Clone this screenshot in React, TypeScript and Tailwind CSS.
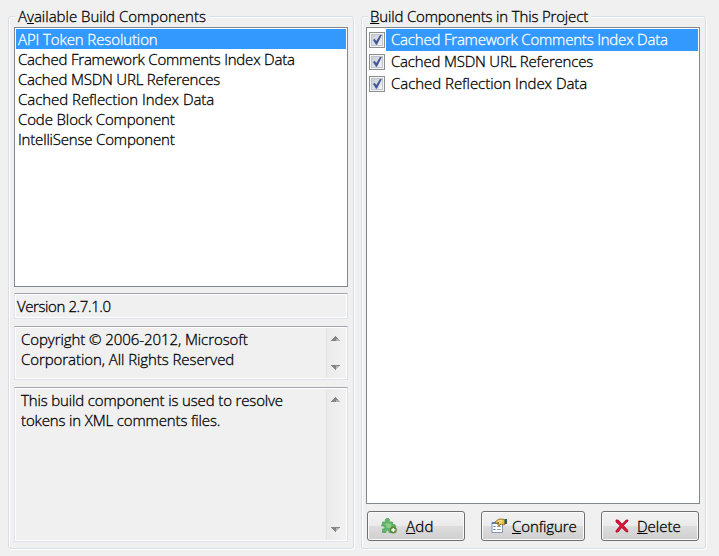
import React from "react";

type Line = { text: string; spacing: string };

const available: Line[] = [
  { text: "API Token Resolution", spacing: "tracking-[-0.1px]" },
  { text: "Cached Framework Comments Index Data", spacing: "tracking-[-0.2px]" },
  { text: "Cached MSDN URL References", spacing: "tracking-[-0.2px]" },
  { text: "Cached Reflection Index Data", spacing: "tracking-[-0.04px]" },
  { text: "Code Block Component", spacing: "tracking-[-0.12px]" },
  { text: "IntelliSense Component", spacing: "tracking-[-0.18px]" },
];

const project: Line[] = available.slice(1, 4);

function Key({ children }: { children: string }) {
  return <span className="underline decoration-1 underline-offset-[1px] [text-decoration-skip-ink:none]">{children}</span>;
}

function Group({ legend, width, children }: { legend: React.ReactNode; width: string; children: React.ReactNode }) {
  return (
    <section className={`relative h-[533px] rounded-[3px] border border-[#d5dfe5] shadow-[1px_1px_0_#fff,inset_1px_1px_0_#fff] ${width}`}>
      <h2 className="absolute -top-[11px] left-[6px] bg-[#f0f0f0] px-[3px] leading-5 font-light whitespace-nowrap">{legend}</h2>
      {children}
    </section>
  );
}

function Scrollbar() {
  return (
    <div className="flex w-5 shrink-0 flex-col items-center justify-between border-l border-[#e2e2e2] bg-linear-to-r from-[#ebebeb] to-[#f2f2f2] pt-[8px] pb-[8px] pr-[3px]">
      <svg width="9" height="5" viewBox="0 0 9 5" shapeRendering="crispEdges">
        <path d="M4 0h1v1h1v1h1v1h1v1h1v1H0V4h1V3h1V2h1V1h1z" fill="#858585" />
        <path d="M5 3h3v1h1v1H5z" fill="#b0b0b0" />
      </svg>
      <svg width="9" height="5" viewBox="0 0 9 5" shapeRendering="crispEdges">
        <path d="M0 0h9v1H8v1H7v1H6v1H5v1H4V4H3V3H2V2H1V1H0z" fill="#858585" />
        <path d="M5 1h3v1H7v1H6v1H5z" fill="#b8b8b8" />
      </svg>
    </div>
  );
}

const sunken = "border border-[#dfe2e9] border-t-[#a5a5ad] shadow-[inset_0_0_0_1px_#fff]";

function Checkbox() {
  return (
    <svg className="block shrink-0" width="16" height="16" viewBox="0 0 16 16">
      <defs>
        <linearGradient id="box" x1="0" y1="0" x2="1" y2="1">
          <stop stopColor="#c5cad3" />
          <stop offset="1" stopColor="#f5f6f7" />
        </linearGradient>
      </defs>
      <rect x=".5" y=".5" width="15" height="15" fill="#f4f4f4" stroke="#8e8f8f" />
      <rect x="2.5" y="2.5" width="11" height="11" fill="url(#box)" stroke="#c0c5cd" />
      <path d="M4 8l1.600-1.200 1.700 2.200L11 3h1.800L8 12.800H7z" fill="#425899" />
    </svg>
  );
}

function Button({ width, pad, children }: { width: string; pad: string; children: React.ReactNode }) {
  return (
    <button className={`flex h-[30px] items-center rounded-[3px] border border-[#707070] bg-[linear-gradient(#f2f2f2,#ebebeb_48%,#dddddd_50%,#cfcfcf)] shadow-[inset_0_0_0_1px_#fafafa] ${width} ${pad}`}>
      {children}
    </button>
  );
}

function PuzzleIcon() {
  return (
    <svg width="16" height="16" viewBox="0 0 16 16">
      <path d="M1.500 4H5L4.300 2.700V1.500L5.500.5h2l1 1v1.200L7.800 4H11.500v3l1.500-.7 1.500 1v2L13 10.500H11.500v4H8V13L6.500 12 5 13v1.500H1.500V11H3l1-1.500L3 8H.8V6.500L1.500 6z" fill="#5fb569" stroke="#52a45a" strokeWidth=".8" />
      <path d="M3.500 5.500H10v4.500H5.500V8z" fill="#8bcd83" />
      <circle cx="12.300" cy="12" r="3.200" fill="#648f35" stroke="#527835" strokeWidth=".6" />
      <path d="M12.300 10v4M10.300 12h4" stroke="#fff" strokeWidth="1.400" />
    </svg>
  );
}

function PropertiesIcon() {
  return (
    <svg width="17" height="16" viewBox="0 0 17 16">
      <path d="M1 4.500h10.500v10H1z" fill="#fff" stroke="#8096b4" />
      <path d="M1 4h8v2H1z" fill="#537cba" />
      <path d="M2.500 8.500h2M2.500 11.500h2" stroke="#486fa7" />
      <path d="M6 8.500h4M6 11.500h4" stroke="#92a3bd" />
      <path d="M4 4l4-3 5 .3 1 1.200v4l-2 .5-2-1-2 2-1.300-1L8 4.500 5 5.500z" fill="#e4bd45" stroke="#8c651c" strokeWidth=".8" />
      <path d="M7 3l4-.6M8 5l3-1" stroke="#fff0a1" />
      <path d="M13.500 1H16v5h-2.500z" fill="#2f5f47" />
    </svg>
  );
}

function DeleteIcon() {
  return (
    <svg width="14" height="14" viewBox="0 0 14 14">
      <path d="M1 1h2.300L7 5.200 11.200 1H13v1L8.500 6.600 12.500 11l.5 1.800h-2L6.800 8.500 3 13H1v-1.200l4.200-5L1 3z" fill="#e3123b" stroke="#9e092a" strokeWidth=".8" />
    </svg>
  );
}

export default function App() {
  return (
    <main className="flex h-[556px] w-[719px] gap-[7px] bg-[#f0f0f0] pt-4 pl-2 font-['Open_Sans','Noto_Sans',sans-serif] text-[15px] leading-5 font-light text-black [-webkit-text-stroke:0.3px]">
      <Group width="w-[346px]" legend={<span>A<Key>v</Key>ailable Build Components</span>}>
        <div className="flex flex-col pt-[10px] pl-[5px]">
          <ul className="h-[260px] w-[334px] border border-[#828790] bg-white p-px">
            {available.map((l, i) => (
              <li key={l.text} className={`h-5 pl-[2px] leading-[21px] whitespace-nowrap ${i === 0 ? "bg-[#3399ff] text-white" : ""}`}>
                <span className={l.spacing}>{l.text}</span>
              </li>
            ))}
          </ul>
          <div className={`mt-[6px] h-[26px] w-[334px] pl-[2px] leading-[25px] tracking-[-0.4px] ${sunken}`}>Version 2.7.1.0</div>
          <div className={`mt-[7px] flex h-[54px] w-[334px] justify-between p-px ${sunken}`}>
            <p className="pt-px pl-[5px] tracking-[-0.07px] whitespace-nowrap">Copyright © 2006-2012, Microsoft<br />Corporation, All Rights Reserved</p>
            <Scrollbar />
          </div>
          <div className={`mt-[7px] flex h-[155px] w-[334px] justify-between p-px ${sunken}`}>
            <p className="pt-px pl-[5px] tracking-[-0.14px] whitespace-nowrap">This build component is used to resolve<br />tokens in XML comments files.</p>
            <Scrollbar />
          </div>
        </div>
      </Group>
      <Group width="w-[345px]" legend={<span className="-ml-px tracking-[-0.16px]"><Key>B</Key>uild Components in This Project</span>}>
        <div className="flex flex-col pt-[10px] pl-[4px]">
          <ul className="h-[477px] w-[334px] border border-[#828790] bg-white p-px">
            {project.map((l, i) => (
              <li key={l.text} className="flex h-[22px] items-center pl-px">
                <Checkbox />
                <span className={`ml-px h-[22px] grow pl-[5px] leading-[21px] whitespace-nowrap ${i === 0 ? "bg-[#3399ff] text-white" : ""}`}>
                  <span className={l.spacing}>{l.text}</span>
                </span>
              </li>
            ))}
          </ul>
          <div className="mt-[7px] ml-px flex gap-4">
            <Button width="w-[98px]" pad="pl-[13px] gap-[9px]"><PuzzleIcon /><span className="tracking-[0.3px]"><Key>A</Key>dd</span></Button>
            <Button width="w-[104px]" pad="pl-[9px] gap-[4px]"><PropertiesIcon /><span className="tracking-[-0.1px]"><Key>C</Key>onfigure</span></Button>
            <Button width="w-[98px]" pad="pl-[13px] gap-[8px]"><DeleteIcon /><span><Key>D</Key>elete</span></Button>
          </div>
        </div>
      </Group>
    </main>
  );
}
